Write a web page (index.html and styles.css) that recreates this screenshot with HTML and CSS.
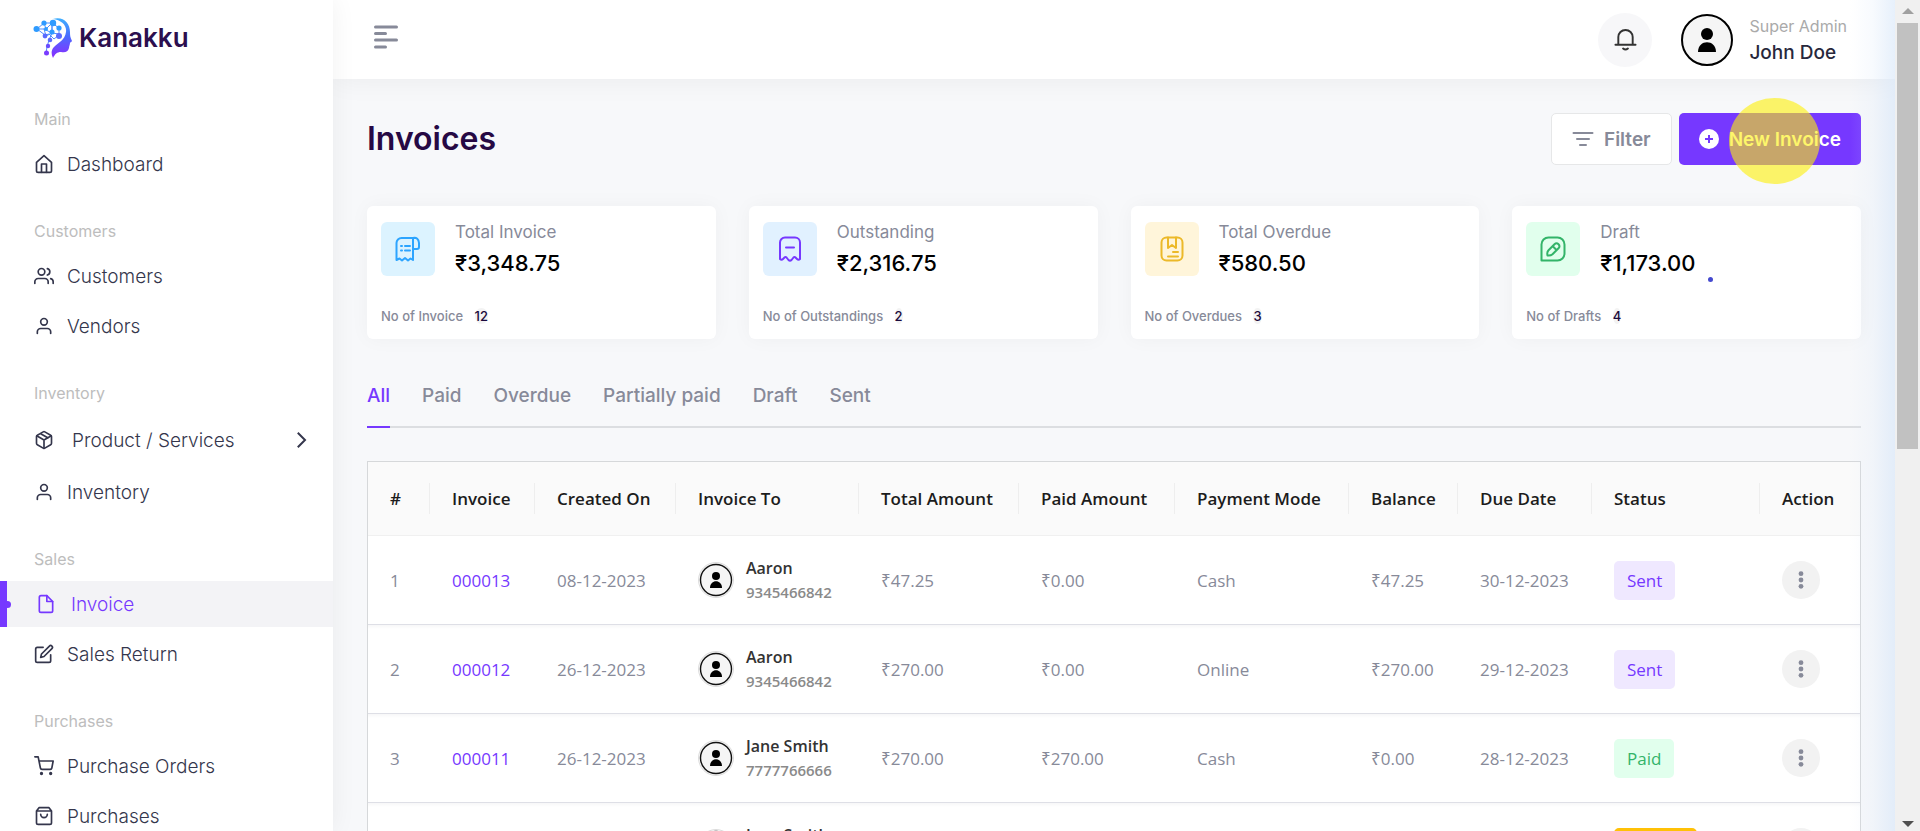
FILE: index.html
```
<!DOCTYPE html>
<html lang="en">
<head>
<meta charset="utf-8">
<title>Kanakku - Invoices</title>
<link rel="stylesheet" href="styles.css">
</head>
<body>
<svg class="defs" aria-hidden="true">
  <defs>
    <symbol id="i-user" viewBox="0 0 24 24"><path d="M20 21v-2a4 4 0 0 0-4-4H8a4 4 0 0 0-4 4v2"/><circle cx="12" cy="7" r="4"/></symbol>
    <symbol id="i-avatar" viewBox="0 0 52 52"><circle cx="26" cy="26" r="25" fill="#f5f5f5" stroke="#000" stroke-width="2"/><circle cx="26" cy="20" r="6" fill="#000"/><path d="M17 38c0-13 18-13 18 0z" fill="#000"/></symbol>
    <symbol id="i-avatar-sm" viewBox="0 0 36 36"><circle cx="18" cy="18" r="17.5" fill="#f5f5f5" stroke="#dcdcdc"/><circle cx="18" cy="18" r="15.5" fill="#f5f5f5" stroke="#111" stroke-width="1.4"/><circle cx="18" cy="14" r="4" fill="#000"/><path d="M12 26c0-9 12-9 12 0z" fill="#000"/></symbol>
    <symbol id="i-dots" viewBox="0 0 24 24"><circle cx="12" cy="5.7" r="2.4"/><circle cx="12" cy="12" r="2.4"/><circle cx="12" cy="18.3" r="2.4"/></symbol>
  </defs>
</svg>
<div class="app">
  <aside class="sidebar">
    <a class="brand" href="#">
      <svg class="brand-mark" viewBox="0 0 40 42" aria-hidden="true">
        <defs><linearGradient id="lg" x1="0" y1="0" x2="0" y2="1"><stop offset="0" stop-color="#3fb0ff"/><stop offset=".45" stop-color="#4a6cff"/><stop offset="1" stop-color="#8a2bff"/></linearGradient></defs>
        <path fill="url(#lg)" d="M20 2C30-1 37 6 37 15c0 3 0 5 2 9 0 1-2 1-2 2 0 2-1 3-1 5-1 4-4 5-8 4-4 0-6 2-8 6-2-4-2-8 1-11 4-4 11-7 12-15C34 8 28 3 20 2z"/>
        <g stroke="#4f8dff" stroke-width="1" fill="none"><path d="M4 12l7-6 8 0 7 5v6l-7-1-8-4-7 0 8 6 4-1 5 5 5-4M19 6v10l-3 7-2 7-1 6M11 6l2 6 6-6 0 10-6 3-2-7"/></g>
        <g fill="#2f9bff"><circle cx="3.500" cy="12" r="3"/><circle cx="11" cy="6" r="2.600"/><circle cx="20" cy="6" r="3.200"/><circle cx="26" cy="11" r="2.600"/><circle cx="13" cy="12" r="2"/><circle cx="19" cy="15" r="2.600"/></g>
        <g fill="#5a6bff"><circle cx="12" cy="19" r="2.400"/><circle cx="26" cy="19" r="3"/><circle cx="17" cy="23" r="2.300"/><circle cx="15" cy="29" r="2.200" fill="#6a4dff"/><circle cx="13.500" cy="36" r="2.500" fill="#7a3cff"/></g>
      </svg>
      <span>Kanakku</span>
    </a>
    <nav class="menu">
      <h2>Main</h2>
      <ul>
        <li><a href="#"><svg class="ico" viewBox="0 0 24 24"><path d="M3 10l9-8 9 8v10a2 2 0 0 1-2 2H5a2 2 0 0 1-2-2z"/><path d="M9 22V12h6v10"/></svg>Dashboard</a></li>
      </ul>
      <h2>Customers</h2>
      <ul>
        <li><a href="#"><svg class="ico" viewBox="0 0 24 24"><path d="M17 21v-2a4 4 0 0 0-4-4H5a4 4 0 0 0-4 4v2"/><circle cx="9" cy="7" r="4"/><path d="M23 21v-2a4 4 0 0 0-3-3.870M16 3.130a4 4 0 0 1 0 7.750"/></svg>Customers</a></li>
        <li><a href="#"><svg class="ico"><use href="#i-user"/></svg>Vendors</a></li>
      </ul>
      <h2>Inventory</h2>
      <ul>
        <li><a class="parent" href="#"><svg class="ico" viewBox="0 0 24 24"><path d="M16.500 9.400L7.500 4.210M21 16V8a2 2 0 0 0-1-1.730l-7-4a2 2 0 0 0-2 0l-7 4A2 2 0 0 0 3 8v8a2 2 0 0 0 1 1.730l7 4a2 2 0 0 0 2 0l7-4A2 2 0 0 0 21 16z"/><path d="M3.270 6.960L12 12.010l8.730-5.050M12 22.080V12"/></svg>Product / Services<svg class="chev" viewBox="0 0 10 16"><path d="M1.500 1.500L8 8l-6.500 6.500"/></svg></a></li>
        <li><a href="#"><svg class="ico"><use href="#i-user"/></svg>Inventory</a></li>
      </ul>
      <h2>Sales</h2>
      <ul>
        <li><a class="active" href="#"><svg class="ico" viewBox="0 0 24 24"><path d="M13 2H6a2 2 0 0 0-2 2v16a2 2 0 0 0 2 2h12a2 2 0 0 0 2-2V9z"/><path d="M13 2v7h7"/></svg>Invoice</a></li>
        <li><a href="#"><svg class="ico" viewBox="0 0 24 24"><path d="M11 4H4a2 2 0 0 0-2 2v14a2 2 0 0 0 2 2h14a2 2 0 0 0 2-2v-7"/><path d="M18.500 2.500a2.120 2.120 0 0 1 3 3L12 15l-4 1 1-4z"/></svg>Sales Return</a></li>
      </ul>
      <h2>Purchases</h2>
      <ul>
        <li><a href="#"><svg class="ico" viewBox="0 0 24 24"><circle cx="9" cy="21" r="1"/><circle cx="20" cy="21" r="1"/><path d="M1 1h4l2.680 13.390a2 2 0 0 0 2 1.610h9.720a2 2 0 0 0 2-1.610L23 6H6"/></svg>Purchase Orders</a></li>
        <li><a href="#"><svg class="ico" viewBox="0 0 24 24"><path d="M6 2L3 6v14a2 2 0 0 0 2 2h14a2 2 0 0 0 2-2V6l-3-4zM3 6h18M16 10a4 4 0 0 1-8 0"/></svg>Purchases</a></li>
      </ul>
    </nav>
  </aside>

  <div class="page">
    <header class="topbar">
      <button class="toggle" aria-label="Toggle menu"><svg viewBox="0 0 24 24"><path d="M1.500 2h21M1.500 8.500h10M1.500 15h21M1.500 22h10"/></svg></button>
      <button class="bell" aria-label="Notifications"><svg viewBox="0 0 24 24"><path d="M1.500 17.500h21M4.500 17.500V9.500a7.500 7.500 0 0 1 15 0v8M9.500 21.500q2.500 2 5 0"/></svg></button>
      <a class="profile" href="#">
        <svg class="avatar"><use href="#i-avatar"/></svg>
        <span class="who"><small>Super Admin</small><strong>John Doe</strong></span>
      </a>
    </header>

    <main class="content">
      <div class="heading">
        <h1>Invoices</h1>
        <button class="btn filter"><svg viewBox="0 0 22 16"><path d="M1.500 2h19M5 8h12M8 14h6"/></svg>Filter</button>
        <button class="btn primary"><svg viewBox="0 0 20 20"><circle cx="10" cy="10" r="10"/><path d="M10 6v8M6 10h8"/></svg>New Invoice<span class="pointer"></span></button>
      </div>

      <section class="cards">
        <article class="card">
          <div class="card-top">
            <span class="tile sky"><svg viewBox="0 0 26 26"><path d="M19 2H6.500A5 5 0 0 0 1.500 7v17l3-1.500 2.500 2 3-2.500 3 2.500 2.500-2 2.500 1.500V2q5.500-1 6 5v4q0 2-2 2h-4M6 10h1M10 10h5M6 14.500h1M10 14.500h5"/></svg></span>
            <div><p>Total Invoice</p><strong>₹3,348.75</strong></div>
          </div>
          <div class="count">No of Invoice <span>12</span></div>
        </article>
        <article class="card">
          <div class="card-top">
            <span class="tile blue"><svg viewBox="0 0 26 26"><path d="M3 23V6.500A5 5 0 0 1 8 1.500h10a5 5 0 0 1 5 5V23q-1.500 1.500-3 0l-1.500-1.500q-1-1-2 0L14.500 24q-1.500 1.500-3 0l-2-2.500q-1-1-2 0L6 23q-1.500 1.500-3 0zM9 11.500h8"/></svg></span>
            <div><p>Outstanding</p><strong>₹2,316.75</strong></div>
          </div>
          <div class="count">No of Outstandings <span>2</span></div>
        </article>
        <article class="card">
          <div class="card-top">
            <span class="tile amber"><svg viewBox="0 0 26 26"><rect x="2.500" y="1.500" width="21" height="23" rx="5"/><path d="M9 1.500V12l4-3 4 3V1.500M14 16h5M9 20.500h10"/></svg></span>
            <div><p>Total Overdue</p><strong>₹580.50</strong></div>
          </div>
          <div class="count">No of Overdues <span>3</span></div>
        </article>
        <article class="card">
          <div class="card-top">
            <span class="tile green"><svg viewBox="0 0 26 26"><path d="M1.500 24.500V8.500a7 7 0 0 1 7-7h9a7 7 0 0 1 7 7v9a7 7 0 0 1-7 7zM7.500 19.500q-.8-3.500 1-5.300l6-6q2-2 4 0t0 4l-6 6q-2 1.800-5 1.300zM13 10.500l3 3"/></svg></span>
            <div><p>Draft</p><strong class="dot">₹1,173.00</strong></div>
          </div>
          <div class="count">No of Drafts <span>4</span></div>
        </article>
      </section>

      <div class="tabs" role="tablist">
        <button role="tab" aria-selected="true">All</button>
        <button role="tab">Paid</button>
        <button role="tab">Overdue</button>
        <button role="tab">Partially paid</button>
        <button role="tab">Draft</button>
        <button role="tab">Sent</button>
      </div>

      <table class="invoices">
        <colgroup><col class="w-num"><col class="w-inv"><col class="w-created"><col class="w-to"><col class="w-total"><col class="w-paid"><col class="w-mode"><col class="w-bal"><col class="w-due"><col class="w-status"><col class="w-action"></colgroup>
        <thead><tr><th>#</th><th>Invoice</th><th>Created On</th><th>Invoice To</th><th>Total Amount</th><th>Paid Amount</th><th>Payment Mode</th><th>Balance</th><th>Due Date</th><th>Status</th><th>Action</th></tr></thead>
        <tbody>
          <tr><td>1</td><td><a href="#">000013</a></td><td>08-12-2023</td><td><div class="client"><svg><use href="#i-avatar-sm"/></svg><div><b>Aaron</b><small>9345466842</small></div></div></td><td>₹47.25</td><td>₹0.00</td><td>Cash</td><td>₹47.25</td><td>30-12-2023</td><td><span class="badge sent">Sent</span></td><td><button class="more" aria-label="Actions"><svg><use href="#i-dots"/></svg></button></td></tr>
          <tr><td>2</td><td><a href="#">000012</a></td><td>26-12-2023</td><td><div class="client"><svg><use href="#i-avatar-sm"/></svg><div><b>Aaron</b><small>9345466842</small></div></div></td><td>₹270.00</td><td>₹0.00</td><td>Online</td><td>₹270.00</td><td>29-12-2023</td><td><span class="badge sent">Sent</span></td><td><button class="more" aria-label="Actions"><svg><use href="#i-dots"/></svg></button></td></tr>
          <tr><td>3</td><td><a href="#">000011</a></td><td>26-12-2023</td><td><div class="client"><svg><use href="#i-avatar-sm"/></svg><div><b>Jane Smith</b><small>7777766666</small></div></div></td><td>₹270.00</td><td>₹270.00</td><td>Cash</td><td>₹0.00</td><td>28-12-2023</td><td><span class="badge paid">Paid</span></td><td><button class="more" aria-label="Actions"><svg><use href="#i-dots"/></svg></button></td></tr>
          <tr><td></td><td></td><td></td><td><div class="client"><svg><use href="#i-avatar-sm"/></svg><div><b>Jane Smith</b><small>7777766666</small></div></div></td><td></td><td></td><td></td><td></td><td></td><td><span class="badge unpaid">Unpaid</span></td><td><button class="more" aria-label="Actions"><svg><use href="#i-dots"/></svg></button></td></tr>
        </tbody>
      </table>
    </main>
  </div>

  <div class="scroll" aria-hidden="true">
    <svg viewBox="0 0 12 6"><path fill="#a0a0a0" d="M0 6l6-6 6 6z"/></svg>
    <div class="track"><div class="thumb"></div></div>
    <svg viewBox="0 0 12 6"><path fill="#505050" d="M0 0l6 6 6-6z"/></svg>
  </div>
</div>
</body>
</html>
```
FILE: styles.css
```
* { box-sizing: border-box; }
body { margin: 0; font-family: Inter, "Noto Sans", sans-serif; color: #878a99; }
h1, h2, p, ul { margin: 0; padding: 0; }
ul { list-style: none; }
a { text-decoration: none; color: inherit; }
button { font: inherit; color: inherit; border: 0; padding: 0; background: none; cursor: pointer; }
svg { display: block; flex: none; fill: none; stroke-linecap: round; stroke-linejoin: round; }
.defs { position: absolute; width: 0; height: 0; }

.app { display: grid; grid-template-columns: 333px minmax(0, 1fr) 25px; grid-template-rows: minmax(0, 1fr); height: 100vh; overflow: hidden; background: #f7f8fa; }

/* Sidebar */
.sidebar { background: #fff; box-shadow: 0 0 24px rgba(0, 0, 0, .06); position: relative; z-index: 2; overflow: hidden; }
.brand { display: flex; align-items: center; gap: 6px; padding: 17px 0 0 33px; color: #2c0f4f; font-size: 26px; font-weight: 600; line-height: 42px; }
.brand-mark { width: 40px; height: 42px; }
.menu { padding-top: 16px; }
.menu h2 { margin: 34px 34px 12px; font-size: 16px; font-weight: 400; line-height: 20px; color: #bdbdbd; }
.menu li + li { margin-top: 4px; }
.menu a { display: flex; align-items: center; gap: 13px; height: 46px; padding: 0 26px 0 34px; font-size: 19px; font-weight: 300; color: #34364c; }
.menu .parent { height: 50px; gap: 18px; }
.menu .active { position: relative; gap: 15px; padding-left: 36px; background: #f3f3f6; color: #7638ff; }
.menu .active::before { content: ""; position: absolute; left: 0; top: 0; bottom: 0; width: 7px; background: #7638ff; }
.menu .active::after { content: ""; position: absolute; left: 4px; top: 20px; width: 7px; height: 7px; border-radius: 50%; background: #7638ff; }
.ico { width: 20px; height: 20px; stroke: currentColor; stroke-width: 2; }
.chev { width: 10px; height: 16px; margin-left: auto; stroke: currentColor; stroke-width: 2; stroke-linecap: square; stroke-linejoin: miter; }

/* Top bar */
.page { display: flex; flex-direction: column; min-width: 0; position: relative; overflow: hidden; }
.page::after { content: ""; position: absolute; top: 0; right: 0; bottom: 0; width: 45px; pointer-events: none; background: linear-gradient(to right, rgba(206, 225, 248, 0), rgba(206, 225, 248, .15) 50%, rgba(206, 225, 248, .5)); }
.topbar { display: flex; align-items: center; flex: none; height: 79px; padding: 0 48px 0 40px; background: #fff; box-shadow: 0 0 30px rgba(0, 0, 0, .06); }
.toggle { margin: 0 auto 6px 0; }
.toggle svg { width: 26px; height: 24px; stroke: #878a99; stroke-width: 3; }
.bell { display: grid; place-items: center; width: 54px; height: 54px; margin-right: 29px; border-radius: 50%; background: #f7f7f9; }
.bell svg { width: 23px; height: 23px; stroke: #333; stroke-width: 2; }
.profile { display: flex; align-items: center; gap: 16px; }
.avatar { width: 52px; height: 52px; }
.who { display: flex; flex-direction: column; gap: 1px; }
.who small { font-size: 16px; line-height: 26px; color: #aaa; }
.who strong { font-size: 19px; font-weight: 500; line-height: 26px; color: #28283c; }

/* Content */
.content { padding: 34px; }
.heading { display: flex; align-items: center; gap: 7px; }
h1 { margin-right: auto; font-size: 32px; font-weight: 600; line-height: 52px; color: #260944; }
.btn { display: flex; align-items: center; justify-content: center; height: 52px; padding: 0 20px; gap: 10px; border-radius: 5px; font-size: 19px; font-weight: 600; }
.filter { border: 1px solid #e6e7e8; background: #fff; }
.filter svg { width: 22px; height: 16px; stroke: #878a99; stroke-width: 2; }
.primary { position: relative; background: #7638ff; color: #fff; }
.primary svg { width: 20px; height: 20px; }
.primary circle { fill: #fff; }
.primary path { stroke: #7638ff; stroke-width: 2; stroke-linecap: butt; }
.pointer { position: absolute; left: 50px; top: -15px; width: 91px; height: 86px; border-radius: 50%; background: rgba(253, 240, 7, .6); }

.cards { display: grid; grid-template-columns: repeat(4, minmax(0, 1fr)); gap: 33px; margin-top: 41px; }
.card { display: flex; flex-direction: column; justify-content: space-between; min-height: 133px; padding: 16px 14px 13px; border-radius: 6px; background: #fff; box-shadow: 0 0 20px rgba(0, 0, 0, .04); }
.card-top { display: flex; gap: 20px; }
.card p { font-size: 17px; line-height: 20px; }
.card strong { display: block; margin-top: 10px; font-size: 22px; font-weight: 500; line-height: 22px; color: #000; }
.tile { display: grid; place-items: center; width: 54px; height: 54px; border-radius: 6px; }
.tile svg { width: 26px; height: 26px; stroke: currentColor; stroke-width: 2; }
.sky { background: #dcf3ff; color: #2ca4ff; }
.blue { background: #e1f1ff; color: #7638ff; }
.amber { background: #fff5da; color: #ecb929; }
.green { background: #e1ffed; color: #33b469; }
.count { font-size: 13px; font-weight: 500; line-height: 20px; }
.count span { margin-left: 8px; border-radius: 50%; background: #f3f3f3; color: #1b0a3c; }
.dot { position: relative; }
.dot::after { content: ""; position: absolute; left: 108px; top: 25px; width: 5px; height: 5px; border-radius: 50%; background: #4449cf; }

.tabs { display: flex; gap: 32px; margin-top: 43px; border-bottom: 2px solid #dcdee1; }
.tabs button { margin-bottom: -2px; padding-bottom: 16px; border-bottom: 2px solid transparent; font-size: 19px; font-weight: 500; line-height: 28px; }
.tabs [aria-selected] { border-color: #7638ff; color: #7638ff; }

/* Invoice table */
.invoices { width: 100%; margin-top: 33px; table-layout: fixed; border-collapse: separate; border-spacing: 0; border: 1px solid #d6d8da; background: #fff; font-family: "Open Sans", "Noto Sans", sans-serif; font-size: 17px; }
.w-num { width: 62px; } .w-inv { width: 105px; } .w-created { width: 141px; } .w-to { width: 183px; }
.w-total { width: 160px; } .w-paid { width: 156px; } .w-mode { width: 174px; } .w-bal { width: 109px; }
.w-due { width: 134px; } .w-status { width: 168px; } .w-action { width: 100px; }
.invoices th, .invoices td { padding: 0 0 0 22px; text-align: left; white-space: nowrap; }
.invoices th { height: 74px; border-bottom: 1px solid #f0f0f0; background: linear-gradient(#eee, #eee) right center / 1px 31px no-repeat #fafafa; color: #1c1c1c; font-size: 17px; font-weight: 600; }
.invoices th:last-child { background: #fafafa; }
.invoices td { height: 89px; border-bottom: 1px solid #dedfe6; }
.invoices tr + tr td { background: linear-gradient(#f7f7f8, #fff 4px); }
.invoices td a { color: #7638ff; }
.client { display: flex; align-items: center; gap: 12px; }
.client svg { width: 36px; height: 36px; }
.client b { display: block; font-size: 16px; font-weight: 600; line-height: 24px; color: #333; }
.client small { display: block; font-size: 15px; font-weight: 600; line-height: 24px; color: #8a8a8a; }
.badge { display: inline-block; padding: 0 13px; border-radius: 5px; line-height: 39px; }
.sent { background: #efe8ff; color: #7638ff; }
.paid { background: #e1ffed; color: #33b469; }
.unpaid { background: #ffc107; color: #fff; }
.more { display: grid; place-items: center; width: 38px; height: 38px; border-radius: 50%; background: #f2f2f2; }
.more svg { width: 24px; height: 24px; fill: #878a99; }

/* Scroll rail */
.scroll { display: flex; flex-direction: column; align-items: center; padding: 8px 0 4px; background: #f0f0f0; }
.scroll svg { width: 12px; height: 6px; }
.track { flex: 1; width: 21px; margin: 9px 0; }
.thumb { height: 54%; background: #c1c1c1; }
```
